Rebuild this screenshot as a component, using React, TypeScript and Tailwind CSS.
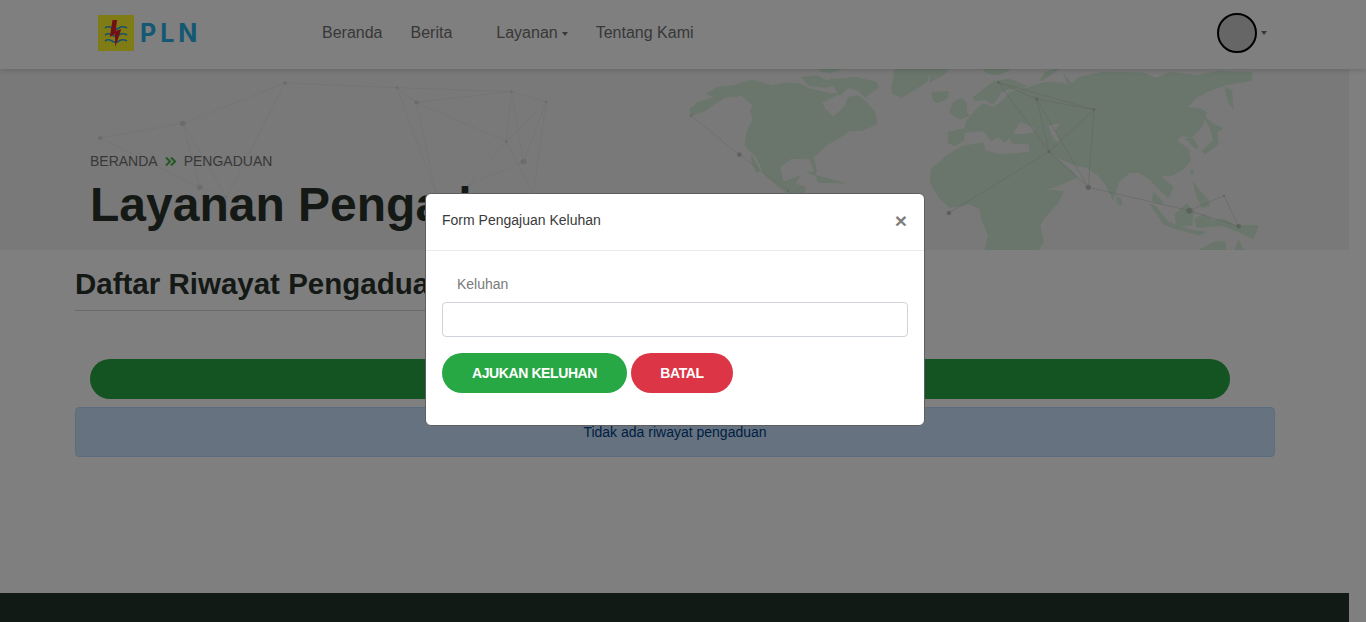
const font = { fontFamily: '"Liberation Sans", Arial, sans-serif' };

function PlnLogo() {
  return (
    <div className="flex items-center">
      <svg width="36" height="36" viewBox="0 0 36 36">
        <rect width="36" height="36" fill="#fff62a" />
        <path d="M7 13q3.500-2.500 7 0t7 0t8 0M7 20q3.500-2.500 7 0t7 0t8 0M7 26q3.500-2.500 7 0t7 0t8 0" fill="none" stroke="#2aa5da" strokeWidth="1.600" />
        <path d="M14.500 5L19 5L17.800 15.700L23.200 14.300L17.300 32L17 19L11.800 22Z" fill="#e3202a" />
      </svg>
      <span className="ml-[6px] text-[25px] leading-none font-bold tracking-[4px] text-[#2ab0e6]" style={{ fontFamily: "Inter, sans-serif" }}>
        PLN
      </span>
    </div>
  );
}

function Caret() {
  return <span className="ml-[4px] inline-block h-0 w-0 border-x-[3.500px] border-t-[4px] border-x-transparent border-t-current align-middle" />;
}

function Navbar() {
  return (
    <nav className="relative z-10 flex h-[69px] w-full items-center bg-white pl-[98px] pr-[99px] pb-[3px] shadow-[0_1px_6px_rgba(0,0,0,0.18)]">
      <div className="w-[224px]">
        <PlnLogo />
      </div>
      <div className="flex items-center text-base text-[#707070]">
        <a className="mr-[28px]">Beranda</a>
        <a className="mr-[44px]">Berita</a>
        <a className="mr-[28px]">
          Layanan
          <Caret />
        </a>
        <a>Tentang Kami</a>
      </div>
      <div className="ml-auto flex items-center text-[#707070]">
        <div className="h-[40px] w-[40px] rounded-full border-2 border-black bg-[#cccccc]" />
        <Caret />
      </div>
    </nav>
  );
}

type Pt = [number, number, number];

function NetworkLines({ points, lines, color, dot }: { points: Pt[]; lines: [number, number][]; color: string; dot: string }) {
  return (
    <g>
      {lines.map(([a, b], i) => (
        <line key={i} x1={points[a][0]} y1={points[a][1]} x2={points[b][0]} y2={points[b][1]} stroke={color} strokeWidth="0.600" vectorEffect="non-scaling-stroke" />
      ))}
      {points.map((p, i) => (
        <circle key={i} cx={p[0]} cy={p[1]} r={p[2]} fill={dot} />
      ))}
    </g>
  );
}

// left network, traced at 2.613 x 3 from the crop
const leftPoints: Pt[] = [
  [262, 204, 6], [478, 160, 8], [745, 39, 5], [1037, 53, 4], [1088, 97, 6], [1336, 65, 4], [1427, 96, 4],
  [1323, 215, 4], [1368, 275, 8], [522, 352, 8], [592, 382, 3], [1140, 372, 2], [1393, 372, 2], [1225, 345, 2],
];
const leftLines: [number, number][] = [
  [0, 1], [1, 2], [2, 3], [3, 4], [4, 5], [5, 6], [4, 7], [7, 5], [7, 6], [6, 8], [5, 8], [7, 12], [1, 9], [1, 10], [0, 9],
  [9, 10], [2, 10], [3, 11], [4, 11], [7, 13], [8, 13], [6, 12], [3, 5],
];
const eastPoints: Pt[] = [
  [205, 40, 4], [320, 90, 5], [492, 122, 4], [357, 248, 4], [475, 355, 8], [57, 432, 7], [778, 425, 9], [882, 380, 3], [926, 472, 7],
];
const eastLines: [number, number][] = [
  [0, 1], [1, 2], [0, 2], [2, 3], [1, 3], [2, 4], [3, 4], [1, 4], [0, 3], [3, 5], [4, 6], [6, 7], [7, 8], [6, 8],
];
const westPoints: Pt[] = [[18, 140, 3], [163, 257, 7], [310, 365, 3]];
const westLines: [number, number][] = [[0, 1], [1, 2]];

const eastLand = [
  "M0 0L55 0L40 18L15 30L0 40Z",
  "M5 70L55 68L52 88L20 102L10 95Z",
  "M160 0L240 0L220 12L195 18L170 12Z",
  "M58 130L70 100L95 88L108 100L110 130L118 140L90 150L72 140Z",
  "M130 85L190 38L240 30L290 52L265 60L235 60L212 70L190 105L165 92L135 95Z",
  "M330 35L345 10L385 0L355 22Z",
  "M400 15L430 50L415 45Z",
  "M885 55L905 65L910 120L895 100Z",
  "M55 222L55 190L105 178L110 155L140 120L160 105L190 115L218 95L240 70L300 55L345 40L395 42L420 50L445 25L520 10L640 12L680 28L720 10L800 20L860 8L965 10L965 35L900 45L850 60L800 85L770 115L810 120L830 130L815 175L785 205L755 200L740 215L775 240L782 275L760 300L725 320L690 320L730 355L715 385L680 355L660 330L625 310L600 310L565 340L555 375L548 392L530 350L500 315L470 295L440 290L415 280L370 262L430 310L440 325L385 350L350 360L315 310L295 280L300 258L298 225L245 222L240 205L225 220L205 205L175 170L210 200L185 215L160 185L105 190L100 215L75 230Z",
  "M0 340L5 300L50 260L95 232L160 222L165 245L215 258L295 250L300 280L330 330L350 362L400 368L385 400L340 450L330 470L340 520L325 543L165 543L175 500L155 450L150 420L120 405L60 415L30 390Z",
  "M560 385L575 390L575 408L562 405Z",
  "M815 135L850 165L878 178L860 190L865 225L825 255L815 245L850 215L840 175Z",
  "M765 208L790 210L805 235L795 238Z",
  "M790 340L805 360L835 395L838 412L815 415L800 380Z",
  "M782 300L792 310L785 318Z",
  "M660 405L680 415L715 460L790 485L828 488L810 498L740 480L700 465Z",
  "M670 370L685 385L700 400L690 405L668 395Z",
  "M735 435L770 405L790 425L785 470L740 470Z",
  "M795 450L820 435L850 455L880 450L920 470L985 470L970 510L930 490L880 470L800 475Z",
  "M808 543L850 520L885 518L888 543Z",
  "M915 543L925 515L940 543Z",
];
const eastSeas = ["M250 195L270 160L310 175L315 190L280 195Z", "M355 170L390 162L375 185L390 220L370 210Z"];
const westLand = [
  "M18 140L15 120L40 100L90 85L65 75L95 55L145 50L200 33L260 50L300 42L345 45L375 60L420 70L440 75L470 70L410 100L420 120L445 145L480 110L490 85L520 80L545 100L570 130L575 165L530 185L495 185L465 205L430 225L385 265L395 310L365 310L400 322L480 342L400 340L375 270L320 268L285 295L295 340L345 320L330 345L360 355L358 375L310 375L240 320L215 265L180 230L185 190L205 150L195 125L205 110L170 80L120 85L95 100L60 125Z",
  "M200 260L225 305L215 310L200 280Z",
  "M350 25L395 20L425 35L440 30L470 30L510 25L575 40L580 55L540 85L520 65L490 55L465 80L445 50L420 55L370 50Z",
  "M400 0L470 0L440 10L410 8Z",
  "M620 60L630 0L735 0L725 40L700 55L650 85L625 75Z",
];

function HeroArt() {
  return (
    <svg className="absolute inset-0" width="1349" height="181" viewBox="0 0 1349 181">
      <g transform="translate(0 1) scale(0.3827 0.3333)">
        <NetworkLines points={leftPoints} lines={leftLines} color="#e2e2e2" dot="#d8d8d8" />
      </g>
      <g transform="translate(685 0) scale(0.3333)" fill="#d4ecd6" stroke="#d4ecd6" strokeWidth="3" strokeLinejoin="round">
        {westLand.map((d) => (
          <path key={d} d={d} />
        ))}
      </g>
      <g transform="translate(930 0) scale(0.3333)">
        <g fill="#d4ecd6" stroke="#d4ecd6" strokeWidth="3" strokeLinejoin="round">
          {eastLand.map((d) => (
            <path key={d} d={d} />
          ))}
        </g>
        {eastSeas.map((d) => (
          <path key={d} d={d} fill="#f3f3f3" />
        ))}
        <NetworkLines points={eastPoints} lines={eastLines} color="#c2cdc3" dot="#bac3bb" />
      </g>
      <g transform="translate(685 0) scale(0.3333)">
        <NetworkLines points={westPoints} lines={westLines} color="#cfd3cf" dot="#bfc3bf" />
      </g>
    </svg>
  );
}

function Hero() {
  return (
    <section className="relative h-[181px] overflow-hidden bg-[#f3f3f3] pl-[90px] pt-[83px]">
      <HeroArt />
      <div className="relative">
        <div className="flex h-[18px] items-center text-sm text-[#707070]">
          <span>BERANDA</span>
          <svg className="ml-[7px] mr-[8px]" width="11" height="9" viewBox="0 0 11 9" fill="none" stroke="#45b04a" strokeWidth="2">
            <path d="M1 0.500L5 4.500L1 8.500M6 0.500L10 4.500L6 8.500" />
          </svg>
          <span>PENGADUAN</span>
        </div>
        <h1 className="mt-[6px] text-[48px] font-bold leading-[58px] text-[#2a322d]">Layanan Pengaduan</h1>
      </div>
    </section>
  );
}

function RiwayatList() {
  return (
    <main className="h-[343px] pl-[75px] pr-[74px] pt-[16px]">
      <div className="w-[700px] border-b border-[#d0d0d0] pb-[8px]">
        <h2 className="text-[29.500px] font-bold leading-[36px] text-[#2a322d]">Daftar Riwayat Pengaduan</h2>
      </div>
      <div className="mt-[48px] ml-[15px] mr-[45px] h-[40px] rounded-full bg-[#28a745]" />
      <div className="mt-[8px] flex h-[50px] items-center justify-center rounded border border-[#b8daff] bg-[#cce5ff] text-sm text-[#004085]">
        Tidak ada riwayat pengaduan
      </div>
    </main>
  );
}

function KeluhanModal() {
  return (
    <div className="absolute inset-0 z-20 bg-black/50">
      <div className="absolute left-[425px] top-[193px] w-[500px] rounded-[6px] border border-[#5f5f5f] bg-white">
        <div className="flex h-[57px] items-center justify-between border-b border-[#e9ecef] pb-[6px] pl-[16px] pr-[17px]">
          <span className="pt-[2px] text-sm text-[#3a3a3a]">Form Pengajuan Keluhan</span>
          <span className="mt-[2px] text-[21px] font-bold leading-none text-[#7f7f7f]">×</span>
        </div>
        <div className="px-[16px] pt-[24px] pb-[32px]">
          <label className="block pl-[15px] text-sm leading-[18px] text-[#7a7a7a]">Keluhan</label>
          <input className="mt-[9px] block h-[35px] w-full rounded border border-[#ced4da] bg-white" />
          <div className="mt-[16px] flex gap-[4px]">
            <button className="h-[40px] w-[185px] rounded-full bg-[#28a745] text-sm font-bold tracking-[-0.4px] text-white">AJUKAN KELUHAN</button>
            <button className="h-[40px] w-[102px] rounded-full bg-[#dc3545] text-sm font-bold tracking-[-0.4px] text-white">BATAL</button>
          </div>
        </div>
      </div>
    </div>
  );
}

export default function App() {
  return (
    <div className="relative h-[622px] w-full overflow-hidden bg-white" style={font}>
      <Navbar />
      <div className="w-[1349px]">
        <Hero />
        <RiwayatList />
        <footer className="h-[29px] bg-[#24342b]" />
      </div>
      <KeluhanModal />
    </div>
  );
}
